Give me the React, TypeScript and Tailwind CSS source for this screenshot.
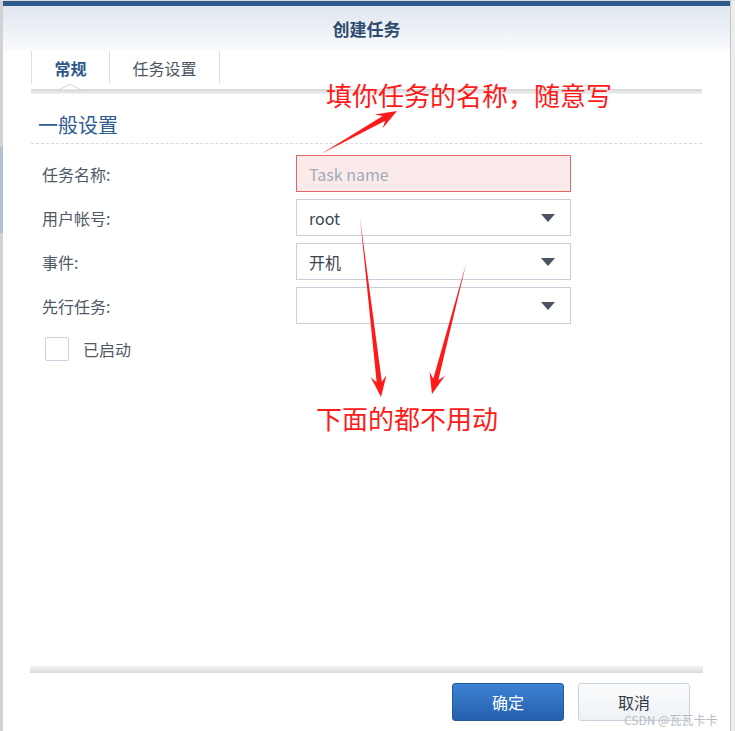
import React from "react";

const font = { fontFamily: '"Noto Sans CJK SC", "Noto Sans", sans-serif' };

function Arrow({ x1, y1, x2, y2 }: { x1: number; y1: number; x2: number; y2: number }) {
  const dx = x2 - x1;
  const dy = y2 - y1;
  const len = Math.hypot(dx, dy);
  const ux = dx / len;
  const uy = dy / len;
  const nx = -uy;
  const ny = ux;
  const at = (d: number, w: number) => `${x1 + ux * d + nx * w},${y1 + uy * d + ny * w}`;
  const pts = [
    at(0, 0),
    at(len - 15, 2.6),
    at(len - 21, 8),
    at(len, 0),
    at(len - 21, -8),
    at(len - 15, -2.6),
  ].join(" ");
  return <polygon points={pts} fill="#ff1a1a" />;
}

function Caret() {
  return (
    <svg width="14" height="8" viewBox="0 0 14 8">
      <polygon points="0,0 14,0 7,8" fill="#4b5260" />
    </svg>
  );
}

function Field({ label, children }: { label: string; children: React.ReactNode }) {
  return (
    <div className="flex h-[37px] items-center">
      <div className="w-[258px] pl-[4px] text-[16px] text-[#505a67]">{label}</div>
      {children}
    </div>
  );
}

function Select({ value }: { value: string }) {
  return (
    <div className="flex h-[37px] w-[275px] items-center justify-between border border-[#c6d0dc] bg-white pl-[12px] pr-[15px] text-[16px] text-[#3b4450]">
      <span>{value}</span>
      <Caret />
    </div>
  );
}

export default function App() {
  return (
    <div className="relative h-[731px] w-[735px] overflow-hidden bg-[#dcdcdc] pt-[1px]" style={font}>
      <div className="flex h-[730px]">
        <div className="flex w-[3px] flex-col">
          <div className="h-[146px] bg-[#d2d2d2]" />
          <div className="h-[86px] bg-[#b3c0d3]" />
          <div className="flex-1 bg-[#d2d2d2]" />
        </div>

        <div className="flex w-[728px] flex-col border-r border-[#c4c4c4] bg-white">
          <div className="h-[5px] bg-[#2c5a8d]" />
          <div className="flex h-[45px] items-center justify-center bg-gradient-to-b from-[#dfe6ef] to-[#fafbfd] text-[17px] font-bold text-[#2e4a6e]">
            创建任务
          </div>

          <div className="ml-[28px] flex h-[33px] text-[16px]">
            <div className="flex w-[79px] items-center justify-center border-x border-[#d7dee8] font-bold text-[#2d5589]">
              常规
            </div>
            <div className="flex w-[110px] items-center justify-center border-r border-[#d7dee8] text-[#4d5562]">
              任务设置
            </div>
          </div>
          <div className="relative mx-[28px] h-[11px]">
            <div className="mt-[5px] h-[5px] bg-gradient-to-b from-[#d6d6d6] to-[#f1f1f1]" />
            <svg className="absolute left-[28px] top-0" width="22" height="10" viewBox="0 0 22 10">
              <polygon points="0,6 11,0 22,6" fill="#ffffff" stroke="#d2d2d2" strokeWidth="1" />
            </svg>
          </div>

          <div className="ml-[35px] mt-[16px] text-[20px] leading-[28px] text-[#2f5d91]">一般设置</div>
          <div className="mx-[28px] mt-[4px] border-t border-dashed border-[#d3dbe6]" />

          <div className="ml-[35px] mt-[11px] flex flex-col gap-[7px]">
            <Field label="任务名称:">
              <div className="flex h-[37px] w-[275px] items-center border border-[#e86565] bg-[#fbeaea] pl-[12px] text-[16px] text-[#a3abb7]">
                Task name
              </div>
            </Field>
            <Field label="用户帐号:">
              <Select value="root" />
            </Field>
            <Field label="事件:">
              <Select value="开机" />
            </Field>
            <Field label="先行任务:">
              <Select value="" />
            </Field>
          </div>

          <div className="ml-[42px] mt-[13px] flex items-center gap-[14px]">
            <div className="h-[24px] w-[24px] rounded-[2px] border border-[#c9d3de] bg-white" />
            <span className="text-[16px] text-[#505a67]">已启动</span>
          </div>

          <div className="flex-1" />

          <div className="mx-[27px] h-[7px] bg-gradient-to-b from-[#f3f3f3] to-[#d9d9d9]" />
          <div className="mb-[10px] mr-[40px] mt-[10px] flex justify-end gap-[14px]">
            <button className="h-[38px] w-[112px] rounded-[3px] border border-[#24589f] bg-gradient-to-b from-[#3e82d3] to-[#2460ad] text-[16px] text-white">
              确定
            </button>
            <button className="h-[38px] w-[112px] rounded-[3px] border border-[#c8d2dc] bg-gradient-to-b from-[#fbfcfd] to-[#eef2f6] text-[16px] text-[#333a44]">
              取消
            </button>
          </div>
        </div>

        <div className="flex-1 bg-[#eeeeee]" />
      </div>

      <div className="absolute left-[326px] top-[78px] text-[26px] leading-[34px] text-[#ff1a1a]">填你任务的名称，随意写</div>
      <div className="absolute left-[316px] top-[401px] text-[26px] leading-[34px] text-[#ff1a1a]">下面的都不用动</div>
      <div className="absolute left-[624px] top-[713px] text-[12px] leading-[14px] text-[#b8bcc2]">CSDN @瓦瓦卡卡</div>

      <svg className="pointer-events-none absolute left-0 top-0" width="735" height="731">
        <Arrow x1={321} y1={154} x2={397} y2={111} />
        <Arrow x1={360} y1={218} x2={381} y2={397} />
        <Arrow x1={466} y1={264} x2={432} y2={394} />
      </svg>
    </div>
  );
}
